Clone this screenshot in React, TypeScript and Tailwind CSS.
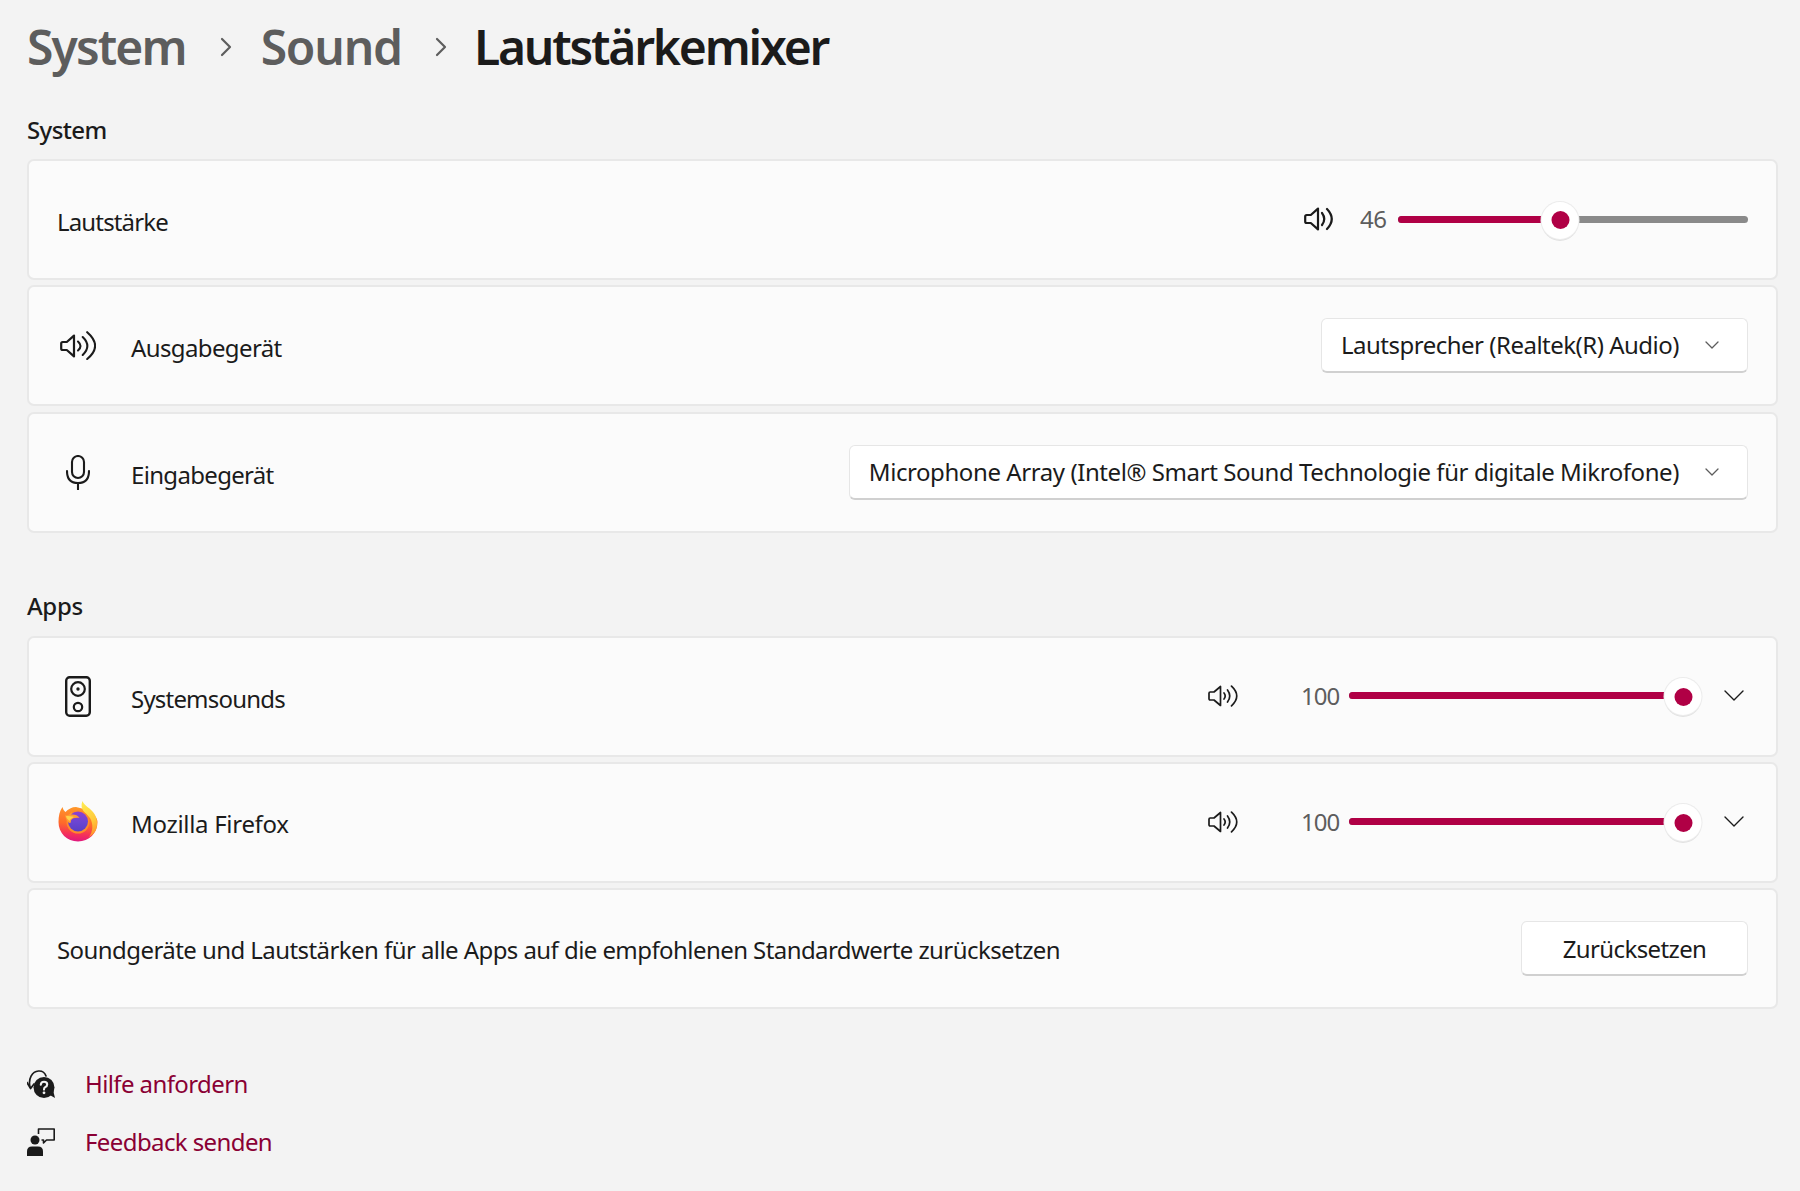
import React from "react";

const Chevron = ({ w = 14, h = 8, c = "#5d5d5d", sw = 1.3 }: { w?: number; h?: number; c?: string; sw?: number }) => (
  <svg width={w} height={h} viewBox={`0 0 ${w} ${h}`} fill="none" className="shrink-0">
    <path d={`M1 1 L${w / 2} ${h - 1} L${w - 1} 1`} stroke={c} strokeWidth={sw} strokeLinecap="round" strokeLinejoin="round" />
  </svg>
);

const Crumb = () => (
  <svg width="12" height="20" viewBox="0 0 12 20" fill="none" className="shrink-0">
    <path d="M2 2 L10 10 L2 18" stroke="#5d5d5d" strokeWidth="2.2" strokeLinecap="round" strokeLinejoin="round" />
  </svg>
);

const SpeakerBody = ({ sw }: { sw: number }) => (
  <path d="M1.2 9.5 Q1.2 8 2.7 8 L6.8 8 L14 1.6 L14 22.4 L6.8 16 L2.7 16 Q1.2 16 1.2 14.5 Z" stroke="#1b1b1b" strokeWidth={sw} strokeLinejoin="round" fill="none" />
);

const SpeakerOne = () => (
  <svg width="29" height="24" viewBox="0 0 29 24" fill="none" className="shrink-0">
    <SpeakerBody sw={2.2} />
    <path d="M18 6 Q22.5 12 18 18" stroke="#1b1b1b" strokeWidth="2.2" strokeLinecap="round" />
    <path d="M23 2 Q32.5 12 23 22" stroke="#1b1b1b" strokeWidth="2.2" strokeLinecap="round" />
  </svg>
);

const SpeakerThree = () => (
  <svg width="36" height="29" viewBox="0 0 36 29" fill="none" className="shrink-0">
    <g transform="translate(0 3)"><SpeakerBody sw={2.2} /></g>
    <path d="M18 10.5 Q23 15 18 19.5" stroke="#1b1b1b" strokeWidth="2.1" strokeLinecap="round" />
    <path d="M22.7 6 Q32 15 22.7 24" stroke="#1b1b1b" strokeWidth="2.1" strokeLinecap="round" />
    <path d="M27.2 1.2 Q43 15 27.2 28" stroke="#1b1b1b" strokeWidth="2.1" strokeLinecap="round" />
  </svg>
);

const SpeakerSmall = () => (
  <svg width="30" height="22" viewBox="0 0 30 22" fill="none" className="shrink-0">
    <path d="M1 8.2 Q1 7 2.2 7 L6 7 L12.5 1.5 L12.5 20.5 L6 15 L2.2 15 Q1 15 1 13.8 Z" stroke="#1b1b1b" strokeWidth="1.7" strokeLinejoin="round" />
    <path d="M16 8 Q18.4 11 16 14" stroke="#1b1b1b" strokeWidth="1.7" strokeLinecap="round" />
    <path d="M19.5 5 Q24 11 19.5 17" stroke="#1b1b1b" strokeWidth="1.7" strokeLinecap="round" />
    <path d="M23.5 1.2 Q34 11 23.5 20.8" stroke="#1b1b1b" strokeWidth="1.7" strokeLinecap="round" />
  </svg>
);

const Mic = () => (
  <svg width="24" height="35" viewBox="0 0 24 35" fill="none" className="shrink-0">
    <rect x="6" y="1" width="12" height="22" rx="6" stroke="#1b1b1b" strokeWidth="2.1" />
    <path d="M1 16 Q1 28 12 28 Q23 28 23 16" stroke="#1b1b1b" strokeWidth="2.1" strokeLinecap="round" />
    <path d="M12 28 V34.5" stroke="#1b1b1b" strokeWidth="2.1" strokeLinecap="round" />
  </svg>
);

const SpeakerBox = () => (
  <svg width="26" height="41" viewBox="0 0 26 41" fill="none" className="shrink-0">
    <rect x="1.2" y="1.2" width="23.6" height="38.6" rx="3.5" stroke="#1b1b1b" strokeWidth="2.4" />
    <circle cx="13" cy="13" r="6.8" stroke="#1b1b1b" strokeWidth="2.2" />
    <circle cx="13" cy="13" r="1.7" fill="#1b1b1b" />
    <circle cx="13" cy="31" r="4.2" stroke="#1b1b1b" strokeWidth="2.2" />
  </svg>
);

const Firefox = () => (
  <svg width="40" height="41" viewBox="0 0 40 41" className="mb-[3px] shrink-0">
    <defs>
      <linearGradient id="ffa" x1="0.6" y1="0" x2="0.5" y2="1">
        <stop offset="0" stopColor="#ff9a2a" />
        <stop offset="0.5" stopColor="#ff6a2a" />
        <stop offset="0.8" stopColor="#f5305a" />
        <stop offset="1" stopColor="#e0187f" />
      </linearGradient>
      <linearGradient id="ffb" x1="0.4" y1="0" x2="0.7" y2="1">
        <stop offset="0" stopColor="#ffe84f" />
        <stop offset="0.6" stopColor="#ffc83a" />
        <stop offset="1" stopColor="#ff8f2a" />
      </linearGradient>
      <linearGradient id="ffc" x1="0.5" y1="0" x2="0.5" y2="1">
        <stop offset="0" stopColor="#8f3fd0" />
        <stop offset="0.55" stopColor="#6a45d2" />
        <stop offset="1" stopColor="#5a3fc4" />
      </linearGradient>
    </defs>
    <path d="M0.5 21 C0.5 15 1.5 10 4.5 6 C5 8 6 10 7.5 11 C10 8 14 6 18 6 L30 9 C36 13 39.5 17 39.5 21 C39.5 32 31 40.5 20 40.5 C9 40.5 0.5 32 0.5 21 Z" fill="url(#ffa)" />
    <path d="M24.5 0 C26 5 33 7 36.5 13 C39.5 18 40 25 37.5 30 C35.5 33 33 35 31 36 C35 31 35.5 23 32 17 C28 12 21 9 24.5 0 Z" fill="url(#ffb)" />
    <circle cx="20" cy="21" r="11.5" fill="#ff8a2a" />
    <circle cx="20" cy="20.5" r="10" fill="url(#ffc)" />
    <path d="M7 14 C10 15 11 13.5 14 11 C14 12 13.5 13 13 13.5 C16 13 20 14 21.5 17 C18 16.5 14 17 13 19.5 C13 22 12 23 10 21 C8.5 19 7.5 17 7 14 Z" fill="#ff9c33" />
    <path d="M8 15 C11 15 14 15 16 16 C14 17 12 18 11.5 20 C9.5 18.5 8.5 17 8 15 Z" fill="#ffd24a" />
  </svg>
);

const HelpIcon = () => (
  <svg width="28" height="28" viewBox="0 0 28 28" fill="none" className="shrink-0">
    <path d="M3 17 C1 9 5 1.5 11.5 1 C15 0.8 18 3 19 6" stroke="#1b1b1b" strokeWidth="1.7" strokeLinecap="round" />
    <path d="M0 12.5 L3.6 18.5 L7 14" stroke="#1b1b1b" strokeWidth="1.7" strokeLinecap="round" strokeLinejoin="round" />
    <circle cx="17" cy="17.5" r="10.5" fill="#1b1b1b" />
    <path d="M21 24 L28 28 L26 20 Z" fill="#1b1b1b" />
    <path d="M13.8 14.8 Q14 11.8 17 11.8 Q20.2 11.8 20.2 14.4 Q20.2 16 18.2 17.1 Q17 17.8 17 19.6" stroke="#f3f3f3" strokeWidth="2.1" strokeLinecap="round" />
    <circle cx="17" cy="22.8" r="1.4" fill="#f3f3f3" />
  </svg>
);

const FeedbackIcon = () => (
  <svg width="28" height="28" viewBox="0 0 28 28" fill="none" className="shrink-0">
    <circle cx="8" cy="12" r="4.5" fill="#1b1b1b" />
    <path d="M0 28 L0 23.5 Q0 18.5 5 18.5 L11 18.5 Q16 18.5 16 23.5 L16 28 Z" fill="#1b1b1b" />
    <path d="M11.5 6 L11.5 1 L27.2 1 L27.2 12 L19.5 12 L16.5 15 L16.5 12 L14.5 12" stroke="#1b1b1b" strokeWidth="1.6" strokeLinejoin="round" />
  </svg>
);

const Slider = ({ width, value }: { width: number; value: number }) => (
  <div className="relative h-[7px] rounded-full bg-[#8a8a8a] shrink-0" style={{ width }}>
    <div className="absolute left-0 top-0 h-full rounded-full bg-[#b00045]" style={{ width: `${value}%` }} />
    <div
      className="absolute top-[-14px] flex h-[37px] w-[37px] -translate-x-1/2 items-center justify-center rounded-full bg-white shadow-[0_0_0_1px_#ececec,0_2px_0_0_#e2e2e2]"
      style={{ left: `${value}%` }}
    >
      <div className="h-[18px] w-[18px] rounded-full bg-[#b00045]" />
    </div>
  </div>
);

const Card = ({ children }: { children: React.ReactNode }) => (
  <div className="flex h-[121px] items-center justify-between rounded-[7px] border-2 border-[#e8e8e8] bg-[#fbfbfb] pl-[28px] pr-[28px]">
    {children}
  </div>
);

const Lead = ({ icon, children }: { icon: React.ReactNode; children: React.ReactNode }) => (
  <div className="flex items-center">
    <div className="-ml-[4px] mr-[28px] flex w-[50px] justify-center">{icon}</div>
    {children}
  </div>
);

const Dropdown = ({ tight, children }: { tight?: boolean; children: React.ReactNode }) => (
  <div className="flex h-[55px] items-center rounded-[6px] border border-b-2 border-[#e6e6e6] border-b-[#d0d0d0] bg-white pl-[19px] pr-[28px]">
    <span className={tight ? "text-[24px] leading-[32px] tracking-[-0.5px] text-[#1b1b1b]" : "text-[24px] leading-[32px] tracking-[-0.42px] text-[#1b1b1b]"}>{children}</span>
    <div className="ml-[26px]">
      <Chevron />
    </div>
  </div>
);

const AppControls = () => (
  <div className="flex items-center pb-[2px]">
    <SpeakerSmall />
    <span className="ml-[63px] w-[37px] text-right text-[24px] leading-[32px] tracking-[-1px] text-[#5d5d5d]">100</span>
    <div className="ml-[11px]">
      <Slider width={334} value={100} />
    </div>
    <div className="ml-[41px] mr-[4px]">
      <Chevron w={20} h={11} c="#1b1b1b" sw={1.4} />
    </div>
  </div>
);

export default function App() {
  return (
    <div className="min-h-[1191px] w-[1800px] bg-[#f3f3f3] pl-[27px] pr-[22px] font-['Noto_Sans',sans-serif]">
      <div className="flex h-[94px] items-center text-[48px] font-semibold leading-[64px]">
        <span className="tracking-[-1.9px] text-[#5d5d5d]">System</span>
        <span className="ml-[34px] mr-[29px] flex"><Crumb /></span>
        <span className="tracking-[-1.2px] text-[#5d5d5d]">Sound</span>
        <span className="ml-[33px] mr-[27px] flex"><Crumb /></span>
        <span className="tracking-[-2.2px] text-[#1b1b1b]">Lautstärkemixer</span>
      </div>
      <h2 className="mt-[20px] h-[45px] text-[24px] font-medium leading-[32px] tracking-[-0.6px] text-[#1b1b1b]">System</h2>
      <div className="flex flex-col gap-[5px]">
        <Card>
          <span className="pt-[5px] text-[24px] leading-[32px] tracking-[-0.85px] text-[#1b1b1b]">Lautstärke</span>
          <div className="flex items-center pb-[1px]">
            <SpeakerOne />
            <span className="ml-[27px] mb-[1px] w-[27px] text-[24px] leading-[32px] tracking-[-0.6px] text-[#5d5d5d]">46</span>
            <div className="ml-[11px]">
              <Slider width={350} value={46.3} />
            </div>
          </div>
        </Card>
        <Card>
          <Lead icon={<SpeakerThree />}>
            <span className="pt-[5px] text-[24px] leading-[32px] tracking-[-0.62px] text-[#1b1b1b]">Ausgabegerät</span>
          </Lead>
          <Dropdown tight>Lautsprecher (Realtek(R) Audio)</Dropdown>
        </Card>
        <div className="mt-px">
          <Card>
            <Lead icon={<Mic />}>
              <span className="pt-[5px] text-[24px] leading-[32px] tracking-[-0.68px] text-[#1b1b1b]">Eingabegerät</span>
            </Lead>
            <Dropdown>Microphone Array (Intel® Smart Sound Technologie für digitale Mikrofone)</Dropdown>
          </Card>
        </div>
      </div>
      <h2 className="mt-[57px] h-[46px] text-[24px] font-medium leading-[32px] tracking-[-0.35px] text-[#1b1b1b]">Apps</h2>
      <div className="flex flex-col gap-[5px]">
        <Card>
          <Lead icon={<SpeakerBox />}>
            <span className="pt-[4px] text-[24px] leading-[32px] tracking-[-0.8px] text-[#1b1b1b]">Systemsounds</span>
          </Lead>
          <AppControls />
        </Card>
        <Card>
          <Lead icon={<Firefox />}>
            <span className="pt-[3px] text-[24px] leading-[32px] tracking-[-0.3px] text-[#1b1b1b]">Mozilla Firefox</span>
          </Lead>
          <AppControls />
        </Card>
        <Card>
          <span className="pt-[2px] text-[24px] leading-[32px] tracking-[-0.57px] text-[#1b1b1b]">Soundgeräte und Lautstärken für alle Apps auf die empfohlenen Standardwerte zurücksetzen</span>
          <div className="flex h-[55px] w-[227px] items-center justify-center rounded-[6px] border border-b-2 border-[#e6e6e6] border-b-[#d0d0d0] bg-white pt-[2px]">
            <span className="text-[24px] leading-[32px] tracking-[-0.62px] text-[#1b1b1b]">Zurücksetzen</span>
          </div>
        </Card>
      </div>
      <div className="mt-[61px] flex flex-col gap-[30px]">
        <div className="flex items-center">
          <HelpIcon />
          <span className="ml-[30px] text-[24px] leading-[28px] tracking-[-0.6px] text-[#8a0034]">Hilfe anfordern</span>
        </div>
        <div className="flex items-center">
          <FeedbackIcon />
          <span className="ml-[30px] text-[24px] leading-[28px] tracking-[-0.6px] text-[#8a0034]">Feedback senden</span>
        </div>
      </div>
    </div>
  );
}
